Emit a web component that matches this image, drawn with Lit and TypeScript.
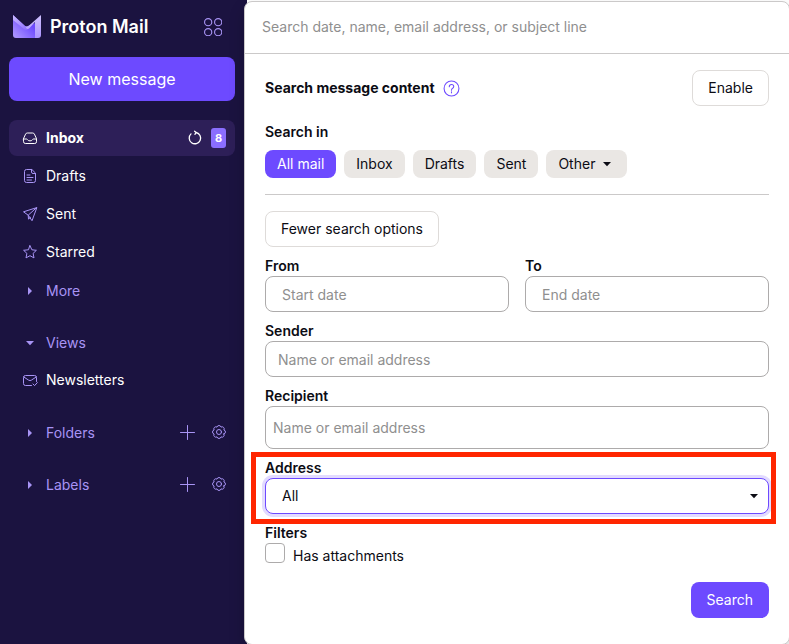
import { LitElement, html, css, svg, nothing } from "lit";
import { customElement, property, state } from "lit/decorators.js";
import { classMap } from "lit/directives/class-map.js";

const ROSETTE =
  "M4.9 2.03A2.1 2.1 0 0 1 2.03 4.9A2.1 2.1 0 0 1 -2.03 4.9A2.1 2.1 0 0 1 -4.9 2.03A2.1 2.1 0 0 1 -4.9 -2.03A2.1 2.1 0 0 1 -2.03 -4.9A2.1 2.1 0 0 1 2.03 -4.9A2.1 2.1 0 0 1 4.9 -2.03A2.1 2.1 0 0 1 4.9 2.03Z";

const ICONS: Record<string, unknown> = {
  inbox: svg`<path d="M1.5 8.6 3.6 4.1Q4.1 3 5.3 3h5.4q1.2 0 1.7 1.1l2.1 4.5v3.1q0 1.8-1.8 1.8H3.3q-1.8 0-1.8-1.8ZM1.5 9h3.1q.5 0 .8.5.7 1.4 2.6 1.4t2.6-1.4q.3-.5.8-.5h3.1"/>`,
  drafts: svg`<path d="M9.500 1.500H4.500q-2 0-2 2v9q0 2 2 2h7q2 0 2-2v-7ZM9.500 1.500V4q0 1.500 1.500 1.500h2.500M5 7h3M5 9.500h6M5 12h4.500"/>`,
  sent: svg`<path d="M14.500 1.700 1.500 5.800l4.700 3.400 3.600 5.200ZM14.300 1.900 6.200 9.200l.3 3.900 2-1.700"/>`,
  star: svg`<path d="m8 1.700 1.900 4.100 4.500.5-3.300 3.100.9 4.500L8 11.700l-4 2.200.9-4.500L1.600 6.300l4.500-.5Z"/>`,
  news: svg`<path d="M9.500 13.500h-6q-2 0-2-2v-6q0-2 2-2h9q2 0 2 2v4M1.800 5l4.900 3.200q1.300.8 2.600 0L14.200 5M11 12l1.600 1.600 2.700-3"/>`,
  plus: svg`<path d="M8.500 1.500v14M1.500 8.500h14"/>`,
  cog: svg`<g transform="translate(8 8)"><path d=${ROSETTE}/><circle r="2.500"/></g>`,
  refresh: svg`<path stroke-width="1.300" d="M9.200 2.500A5.700 5.700 0 1 1 4 3.900M9.200 2.500 7.600 1.200M9.200 2.500 7.900 4.300"/>`,
  right: svg`<path class="solid" d="M6 4 10 8l-4 4Z"/>`,
  down: svg`<path class="solid" d="M4 6h8l-4 4.300Z"/>`,
  help: svg`<circle cx="8" cy="8" r="7"/><path d="M5.900 6.400q0-2.100 2.100-2.100t2.100 1.900q0 1-1 1.600T8 9.400v.3M8 11.100v1"/>`,
  apps: svg`<circle cx="3.700" cy="3.700" r="3.200"/><circle cx="12.600" cy="3.700" r="3.200"/><circle cx="3.700" cy="12.600" r="3.200"/><circle cx="12.600" cy="12.600" r="3.200"/>`,
};

@customElement("mail-icon")
class MailIcon extends LitElement {
  @property() name = "";
  @property({ type: Number }) size = 16;

  static styles = css`
    :host {
      display: inline-flex;
      flex: none;
    }
    svg {
      display: block;
      fill: none;
      stroke: currentColor;
      stroke-linejoin: round;
      stroke-linecap: round;
    }
    .solid {
      fill: currentColor;
      stroke: none;
    }
  `;

  render() {
    return html`<svg width=${this.size} height=${this.size} viewBox="0 0 16 16" aria-hidden="true">
      ${ICONS[this.name] ?? nothing}
    </svg>`;
  }
}

@customElement("mail-sidebar")
class MailSidebar extends LitElement {
  static styles = css`
    :host {
      display: flex;
      flex-direction: column;
      box-sizing: border-box;
      padding: 5px 12px 16px 9px;
      background: #1b1340;
      color: #fff;
    }
    header {
      display: flex;
      align-items: center;
      height: 44px;
      padding: 0 13px 0 4px;
      margin-bottom: 8px;
    }
    .brand {
      display: flex;
      align-items: center;
      gap: 9px;
      color: inherit;
      text-decoration: none;
      font-size: 18px;
      font-weight: 600;
      line-height: 24px;
    }
    button {
      font: inherit;
      color: inherit;
      background: none;
      border: 0;
      padding: 0;
      text-align: left;
      cursor: pointer;
      display: inline-flex;
      align-items: center;
    }
    .apps {
      margin-left: auto;
      color: #a894f5;
    }
    .compose {
      justify-content: center;
      height: 44px;
      border-radius: 8px;
      background: #6d4aff;
      font-size: 16px;
      margin-bottom: 19px;
    }
    nav {
      display: flex;
      flex-direction: column;
      gap: 16px;
    }
    ul {
      list-style: none;
      margin: 0;
      padding: 0;
      display: flex;
      flex-direction: column;
      gap: 2px;
    }
    .row {
      display: flex;
      align-items: center;
      height: 36px;
      padding: 0 8px 0 13px;
      border-radius: 8px;
    }
    .row.active {
      background: #2d1f58;
      font-weight: 700;
    }
    .link {
      display: flex;
      align-items: center;
      flex: 1;
      gap: 8px;
      color: inherit;
      text-decoration: none;
    }
    .weak .link {
      padding-top: 2px;
    }
    .link mail-icon,
    .weak {
      color: #a894f5;
    }
    .active mail-icon {
      color: #fff;
    }
    .tools {
      display: flex;
      gap: 16px;
    }
    .active .tools {
      align-items: center;
      gap: 8px;
      padding-right: 1px;
    }
    .badge {
      width: 15px;
      border-radius: 3px;
      background: #8a6eff;
      font-size: 11px;
      line-height: 20px;
      text-align: center;
    }
  `;

  private folder(icon: string, label: string, unread = 0) {
    return html`<li class=${classMap({ row: true, active: unread > 0 })}>
      <a class="link" href="#"><mail-icon name=${icon}></mail-icon>${label}</a>
      ${unread
        ? html`<span class="tools">
            <button aria-label="Refresh"><mail-icon name="refresh"></mail-icon></button>
            <span class="badge">${unread}</span>
          </span>`
        : nothing}
    </li>`;
  }

  private section(label: string, open: boolean, tools = false) {
    return html`<li class="row weak">
      <button class="link" aria-expanded=${open}>
        <mail-icon name=${open ? "down" : "right"}></mail-icon>${label}
      </button>
      ${tools
        ? html`<span class="tools">
            <button aria-label="Add"><mail-icon name="plus"></mail-icon></button>
            <button aria-label="Manage"><mail-icon name="cog"></mail-icon></button>
          </span>`
        : nothing}
    </li>`;
  }

  render() {
    return html`
      <header>
        <a class="brand" href="#">
          <svg width="28" height="24" viewBox="0 0 28 24" aria-hidden="true">
            <defs>
              <linearGradient id="flap" x1="0" y1="0" x2="1" y2="1">
                <stop offset="0" stop-color="#cbbcff" />
                <stop offset="1" stop-color="#8462ff" />
              </linearGradient>
              <linearGradient id="body" x1="0" y1="1" x2="1" y2="0">
                <stop offset="0" stop-color="#b29cff" />
                <stop offset="0.7" stop-color="#6d4aff" />
              </linearGradient>
              <linearGradient id="side" x1="0" y1="1" x2="0" y2="0">
                <stop offset="0" stop-color="#ab94ff" />
                <stop offset="1" stop-color="#cfc1ff" />
              </linearGradient>
            </defs>
            <path d="M0 0 12 11q2 1.500 4 0L22 8v15H3q-3 0-3-3Z" fill="url(#body)" />
            <path d="M0 0 11.500 10.500q2 1.800 4 .3L19 9l-4 5q-2 2-4 0L0 5Z" fill="url(#flap)" />
            <path d="M28 0 15.500 11q-1.500 1-3 .500l1 2q1.500 1 3-.500L22 7v16h3q3 0 3-3Z" fill="url(#side)" />
          </svg>
          Proton Mail
        </a>
        <button class="apps" aria-label="Apps"><mail-icon name="apps" size="18"></mail-icon></button>
      </header>
      <button class="compose">New message</button>
      <nav>
        <ul>
          ${this.folder("inbox", "Inbox", 8)} ${this.folder("drafts", "Drafts")}
          ${this.folder("sent", "Sent")} ${this.folder("star", "Starred")} ${this.section("More", false)}
        </ul>
        <ul>
          ${this.section("Views", true)} ${this.folder("news", "Newsletters")}
        </ul>
        <ul>
          ${this.section("Folders", false, true)}
        </ul>
        <ul>
          ${this.section("Labels", false, true)}
        </ul>
      </nav>
    `;
  }
}

@customElement("search-panel")
class SearchPanel extends LitElement {
  @state() private scope = "All mail";

  static styles = css`
    :host {
      display: block;
      box-sizing: border-box;
      border: 1px solid #cbc9c9;
      border-radius: 8px;
      background: #fff;
      color: #0c0c14;
      box-shadow: 0 8px 16px rgba(0, 0, 0, 0.2);
    }
    button,
    input,
    select {
      box-sizing: border-box;
      font: inherit;
      color: inherit;
      margin: 0;
    }
    button {
      display: inline-flex;
      align-items: center;
      cursor: pointer;
    }
    input::placeholder {
      color: #8f8f8f;
      opacity: 1;
    }
    .query {
      display: block;
      width: 100%;
      height: 52px;
      padding: 0 17px 2px;
      border: 0;
      border-bottom: 1px solid #cbc9c9;
      border-radius: 8px 8px 0 0;
      background: none;
      outline: none;
    }
    form {
      display: flex;
      flex-direction: column;
      padding: 16px 20px 26px;
    }
    .content {
      display: flex;
      align-items: center;
      gap: 8px;
      margin-bottom: 16px;
    }
    .help {
      padding: 0;
      border: 0;
      background: none;
      color: #6d4aff;
    }
    .outlined {
      height: 36px;
      padding: 0 15px;
      border: 1px solid #dedbd9;
      border-radius: 8px;
      background: #fff;
    }
    .content .outlined {
      margin-left: auto;
    }
    .title {
      display: block;
      font-weight: 600;
      line-height: 20px;
    }
    .content .title {
      font-weight: 700;
    }
    .chips {
      display: flex;
      flex-wrap: wrap;
      gap: 8px;
      margin-top: 8px;
      padding-bottom: 16px;
      border-bottom: 1px solid #cbc9c9;
      margin-bottom: 16px;
    }
    .chip {
      height: 28px;
      padding: 0 12px;
      border: 0;
      border-radius: 8px;
      background: #eae7e4;
      gap: 4px;
    }
    .chip.on {
      background: #6d4aff;
      color: #fff;
    }
    .fewer {
      align-self: flex-start;
    }
    .fields {
      display: grid;
      grid-template-columns: 1fr 1fr;
      gap: 9px 16px;
      margin: 9px 0;
    }
    .field {
      position: relative;
      grid-column: 1 / -1;
    }
    .half {
      grid-column: auto;
    }
    .box {
      display: block;
      width: 100%;
      height: 36px;
      padding: 0 12px;
      border: 1px solid #adabab;
      border-radius: 8px;
      background: #fff;
      outline: none;
    }
    .half .box,
    select.box {
      padding: 0 16px;
    }
    .box.tall {
      height: 43px;
      padding: 0 7px;
    }
    select.box {
      appearance: none;
      border-color: #6d4aff;
      box-shadow: 0 0 0 3px #e2dbff;
    }
    .picker {
      display: grid;
      align-items: center;
    }
    .picker > * {
      grid-area: 1 / 1;
    }
    .picker mail-icon {
      justify-self: end;
      margin-right: 7px;
      pointer-events: none;
      z-index: 1;
    }
    .highlight {
      position: absolute;
      inset: -6px -7px -10px -14px;
      border: 5px solid #ff2600;
      pointer-events: none;
    }
    .check {
      display: flex;
      gap: 8px;
      line-height: 26px;
      align-self: flex-start;
    }
    .check input {
      appearance: none;
      width: 20px;
      height: 20px;
      border: 1px solid #adabab;
      border-radius: 4px;
      background: #fff;
    }
    .submit {
      align-self: flex-end;
      height: 36px;
      padding: 0 16px;
      margin-top: 13px;
      border: 0;
      border-radius: 8px;
      background: #6d4aff;
      color: #fff;
    }
  `;

  render() {
    return html`
      <input class="query" type="text" aria-label="Search" placeholder="Search date, name, email address, or subject line" />
      <form @submit=${(e: Event) => e.preventDefault()}>
        <div class="content">
          <span class="title">Search message content</span>
          <button class="help" type="button" aria-label="Help"><mail-icon name="help" size="17"></mail-icon></button>
          <button class="outlined" type="button">Enable</button>
        </div>
        <span class="title">Search in</span>
        <div class="chips">
          ${["All mail", "Inbox", "Drafts", "Sent", "Other"].map(
            (name) => html`<button
              type="button"
              class=${classMap({ chip: true, on: this.scope === name })}
              aria-pressed=${this.scope === name}
              @click=${() => (this.scope = name)}
            >
              ${name}${name === "Other" ? html`<mail-icon name="down"></mail-icon>` : nothing}
            </button>`
          )}
        </div>
        <button class="outlined fewer" type="button">Fewer search options</button>
        <div class="fields">
          <div class="field half">
            <label class="title" for="from">From</label>
            <input class="box" id="from" placeholder="Start date" />
          </div>
          <div class="field half">
            <label class="title" for="to">To</label>
            <input class="box" id="to" placeholder="End date" />
          </div>
          <div class="field">
            <label class="title" for="sender">Sender</label>
            <input class="box" id="sender" placeholder="Name or email address" />
          </div>
          <div class="field">
            <label class="title" for="recipient">Recipient</label>
            <input class="box tall" id="recipient" placeholder="Name or email address" />
          </div>
          <div class="field">
            <label class="title" for="address">Address</label>
            <div class="picker">
              <select class="box" id="address">
                <option>All</option>
              </select>
              <mail-icon name="down"></mail-icon>
            </div>
            <div class="highlight"></div>
          </div>
        </div>
        <span class="title">Filters</span>
        <label class="check"><input type="checkbox" />Has attachments</label>
        <button class="submit" type="submit">Search</button>
      </form>
    `;
  }
}

@customElement("app-root")
class AppRoot extends LitElement {
  static styles = css`
    :host {
      display: grid;
      grid-template-columns: 247px minmax(0, 1fr);
      min-height: 100vh;
      overflow: hidden;
      background: #fff;
      font-family: Inter, "Liberation Sans", sans-serif;
      font-size: 14px;
      line-height: 20px;
    }
    search-panel {
      margin: 1px -1px -1px -3px;
    }
  `;

  render() {
    return html`<mail-sidebar></mail-sidebar><search-panel></search-panel>`;
  }
}
